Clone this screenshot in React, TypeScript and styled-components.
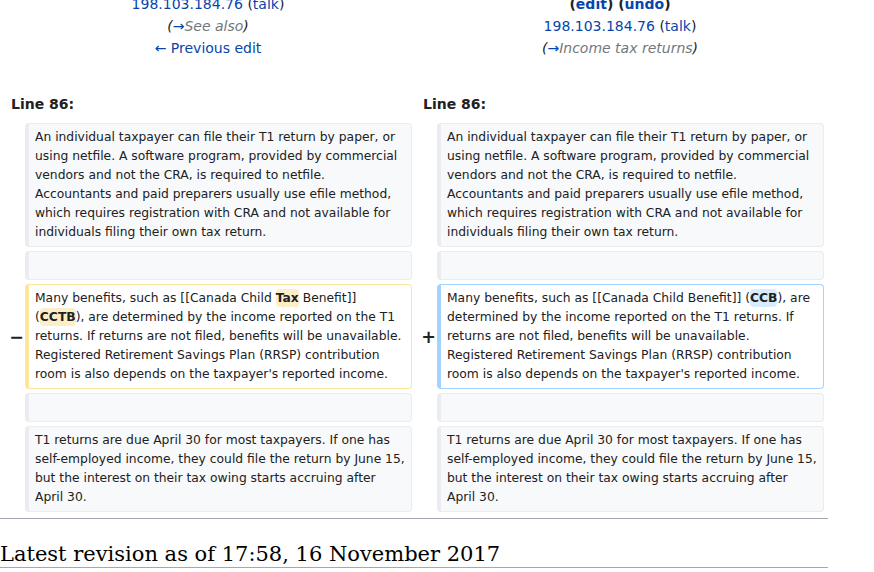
import React from "react";
import styled, { createGlobalStyle } from "styled-components";

const GlobalStyle = createGlobalStyle`
  html, body { margin: 0; padding: 0; background: #ffffff; }
  body {
    font-family: "DejaVu Sans", sans-serif;
    color: #202122;
    overflow: hidden;
  }
`;

const Page = styled.div`
  width: 828px;
`;

const DiffGrid = styled.div`
  display: grid;
  grid-template-columns: 17px 387px 17px 387px;
  column-gap: 4px;
  row-gap: 4px;
  padding: 4px;
  margin-top: -11px;
  font-size: 14px;
`;

const HeaderCell = styled.div`
  grid-column: span 2;
  text-align: center;
  line-height: 22px;
`;

const HeaderLine = styled.div<{ $bold?: boolean }>`
  font-weight: ${(p) => (p.$bold ? "bold" : "normal")};
`;

const Link = styled.a`
  color: #0645ad;
  text-decoration: none;
`;

const Paren = styled.span`
  color: #202122;
`;

const Comment = styled.span`
  color: #72777d;
  font-style: italic;
`;

const LinenoCell = styled.div`
  grid-column: span 2;
  font-weight: bold;
  line-height: 22px;
  padding: 30px 7px 4px;
`;

const Marker = styled.div`
  display: flex;
  align-items: center;
  justify-content: flex-end;
  margin-right: -3px;
  font-weight: bold;
  font-size: 17.5px;
  color: #202122;
`;

type Kind = "context" | "deleted" | "added";

const borderColor: Record<Kind, string> = {
  context: "#eaecf0",
  deleted: "#ffe49c",
  added: "#a3d3ff",
};

const Box = styled.div<{ $kind: Kind }>`
  font-size: 12.32px;
  line-height: 19px;
  padding: 4px 6px;
  border: 1px solid ${(p) => borderColor[p.$kind]};
  border-left-width: 4px;
  border-radius: 4px;
  background: ${(p) => (p.$kind === "context" ? "#f8f9fa" : "#ffffff")};
  color: #202122;
  overflow-wrap: break-word;
`;

const Change = styled.span<{ $kind: "deleted" | "added" }>`
  font-weight: bold;
  border-radius: 4px;
  padding: 2px 0;
  background: ${(p) => (p.$kind === "deleted" ? "#feeec8" : "#d8ecff")};
`;

const Rule = styled.div`
  height: 1px;
  background: #a2a9b1;
  margin-top: 2px;
`;

const Heading = styled.h2`
  margin: 22px 0 0;
  padding: 0;
  font-family: "DejaVu Serif", serif;
  font-weight: normal;
  font-size: 21px;
  line-height: 26px;
  color: #000000;
  border-bottom: 1px solid #a2a9b1;
`;

const para1 =
  "An individual taxpayer can file their T1 return by paper, or using netfile. A software program, provided by commercial vendors and not the CRA, is required to netfile. Accountants and paid preparers usually use efile method, which requires registration with CRA and not available for individuals filing their own tax return.";
const para3 =
  "T1 returns are due April 30 for most taxpayers. If one has self-employed income, they could file the return by June 15, but the interest on their tax owing starts accruing after April 30.";

export default function App() {
  return (
    <>
      <GlobalStyle />
      <Page>
        <DiffGrid>
          <HeaderCell>
            <HeaderLine>
              <Link href="#">198.103.184.76</Link> <Paren>(</Paren>
              <Link href="#">talk</Link>
              <Paren>)</Paren>
            </HeaderLine>
            <HeaderLine>
              <Comment>
                <Paren>(</Paren>
                <Link href="#">→</Link>See also<Paren>)</Paren>
              </Comment>
            </HeaderLine>
            <HeaderLine>
              <Link href="#">← Previous edit</Link>
            </HeaderLine>
          </HeaderCell>
          <HeaderCell>
            <HeaderLine $bold>
              <Paren>(</Paren>
              <Link href="#">edit</Link>
              <Paren>)</Paren> <Paren>(</Paren>
              <Link href="#">undo</Link>
              <Paren>)</Paren>
            </HeaderLine>
            <HeaderLine>
              <Link href="#">198.103.184.76</Link> <Paren>(</Paren>
              <Link href="#">talk</Link>
              <Paren>)</Paren>
            </HeaderLine>
            <HeaderLine>
              <Comment>
                <Paren>(</Paren>
                <Link href="#">→</Link>Income tax returns<Paren>)</Paren>
              </Comment>
            </HeaderLine>
          </HeaderCell>

          <LinenoCell>Line 86:</LinenoCell>
          <LinenoCell>Line 86:</LinenoCell>

          <Marker />
          <Box $kind="context">{para1}</Box>
          <Marker />
          <Box $kind="context">{para1}</Box>

          <Marker />
          <Box $kind="context">{"\u00a0"}</Box>
          <Marker />
          <Box $kind="context">{"\u00a0"}</Box>

          <Marker>−</Marker>
          <Box $kind="deleted">
            Many benefits, such as [[Canada Child <Change $kind="deleted">Tax</Change> Benefit]] (
            <Change $kind="deleted">CCTB</Change>), are determined by the income reported on the
            T1 returns. If returns are not filed, benefits will be unavailable. Registered
            Retirement Savings Plan (RRSP) contribution room is also depends on the taxpayer's
            reported income.
          </Box>
          <Marker>+</Marker>
          <Box $kind="added">
            Many benefits, such as [[Canada Child Benefit]] (<Change $kind="added">CCB</Change>),
            are determined by the income reported on the T1 returns. If returns are not filed,
            benefits will be unavailable. Registered Retirement Savings Plan (RRSP) contribution
            room is also depends on the taxpayer's reported income.
          </Box>

          <Marker />
          <Box $kind="context">{"\u00a0"}</Box>
          <Marker />
          <Box $kind="context">{"\u00a0"}</Box>

          <Marker />
          <Box $kind="context">{para3}</Box>
          <Marker />
          <Box $kind="context">{para3}</Box>
        </DiffGrid>
        <Rule />
        <Heading>Latest revision as of 17:58, 16 November 2017</Heading>
      </Page>
    </>
  );
}
